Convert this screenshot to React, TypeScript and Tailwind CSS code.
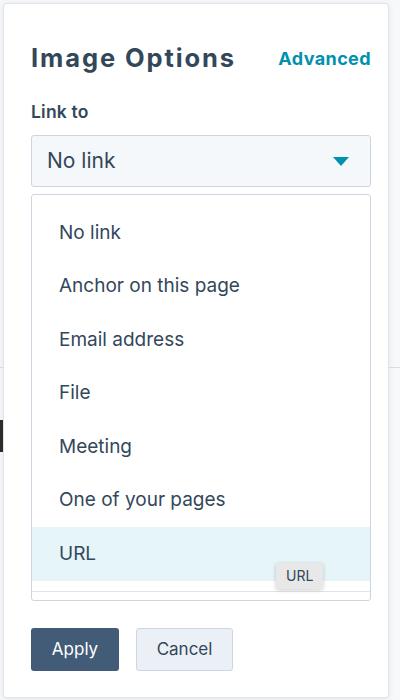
import { useState } from 'react'

const OPTIONS = [
  'No link',
  'Anchor on this page',
  'Email address',
  'File',
  'Meeting',
  'One of your pages',
  'URL',
]

export default function App() {
  const [selected] = useState('URL')

  return (
    <div
      className="relative h-[700px] w-[400px] overflow-hidden bg-[#f7f8f9]"
      style={{ fontFamily: 'Inter, "Noto Sans", sans-serif' }}
    >
      {/* page behind the popover */}
      <div className="absolute left-0 top-[367px] h-px w-full bg-[#d9dee3]" />
      <div className="absolute left-0 top-[420px] h-[32px] w-[3px] bg-[#2d2d2d]" />

      {/* Popover */}
      <div className="absolute left-[3px] top-[3px] flex h-[695px] w-[386px] flex-col rounded-[3px] border border-[#dfe3eb] bg-white/95 pl-[27px] pr-[17px] shadow-[0_1px_6px_rgba(0,0,0,0.08)]">
        <div className="flex items-center justify-between pt-[37px]">
          <h2 className="text-[25.5px] font-bold leading-[34px] tracking-[1.9px] text-[#33475b]">Image Options</h2>
          <a className="text-[18px] font-bold tracking-[0.4px] text-[#0091ae]" href="#">
            Advanced
          </a>
        </div>

        <label className="mt-[25px] text-[17.5px] font-semibold leading-[24px] tracking-[0.2px] text-[#33475b]">
          Link to
        </label>

        <button className="mt-[11px] flex h-[52px] w-full items-center justify-between rounded-[3px] border border-[#cbd6e2] bg-[#f5f8fa] pl-[15px] pr-[21px] text-left">
          <span className="text-[21px] text-[#33475b]">No link</span>
          <svg width="16" height="9" viewBox="0 0 16 9">
            <path d="M0 0h16L8 9z" fill="#0091ae" />
          </svg>
        </button>

        {/* option list */}
        <div className="relative mt-[7px] h-[407px] w-full rounded-[3px] border border-[#cbd6e2] bg-white">
          <ul className="h-[397px] border-b border-[#dfe3eb] pt-[11px]">
            {OPTIONS.map((o) => (
              <li
                key={o}
                className={`flex h-[53.5px] items-center pl-[27px] text-[19px] text-[#33475b] ${
                  o === selected ? 'bg-[#e5f5f8]' : ''
                }`}
              >
                {o}
              </li>
            ))}
          </ul>
          <div className="absolute left-[244px] top-[368px] rounded-[3px] bg-[#e8e8e8] px-[10px] py-[4px] text-[14px] leading-[18px] text-[#33475b] shadow-[0_1px_4px_rgba(0,0,0,0.2)]">
            URL
          </div>
        </div>

        <div className="mt-[27px] flex gap-[17px]">
          <button className="flex h-[43px] w-[88px] items-center justify-center rounded-[3px] bg-[#425b76] text-[17px] text-white">
            Apply
          </button>
          <button className="flex h-[43px] w-[97px] items-center justify-center rounded-[3px] border border-[#cbd6e2] bg-[#eaf0f6] text-[17px] text-[#33475b]">
            Cancel
          </button>
        </div>
      </div>
    </div>
  )
}
